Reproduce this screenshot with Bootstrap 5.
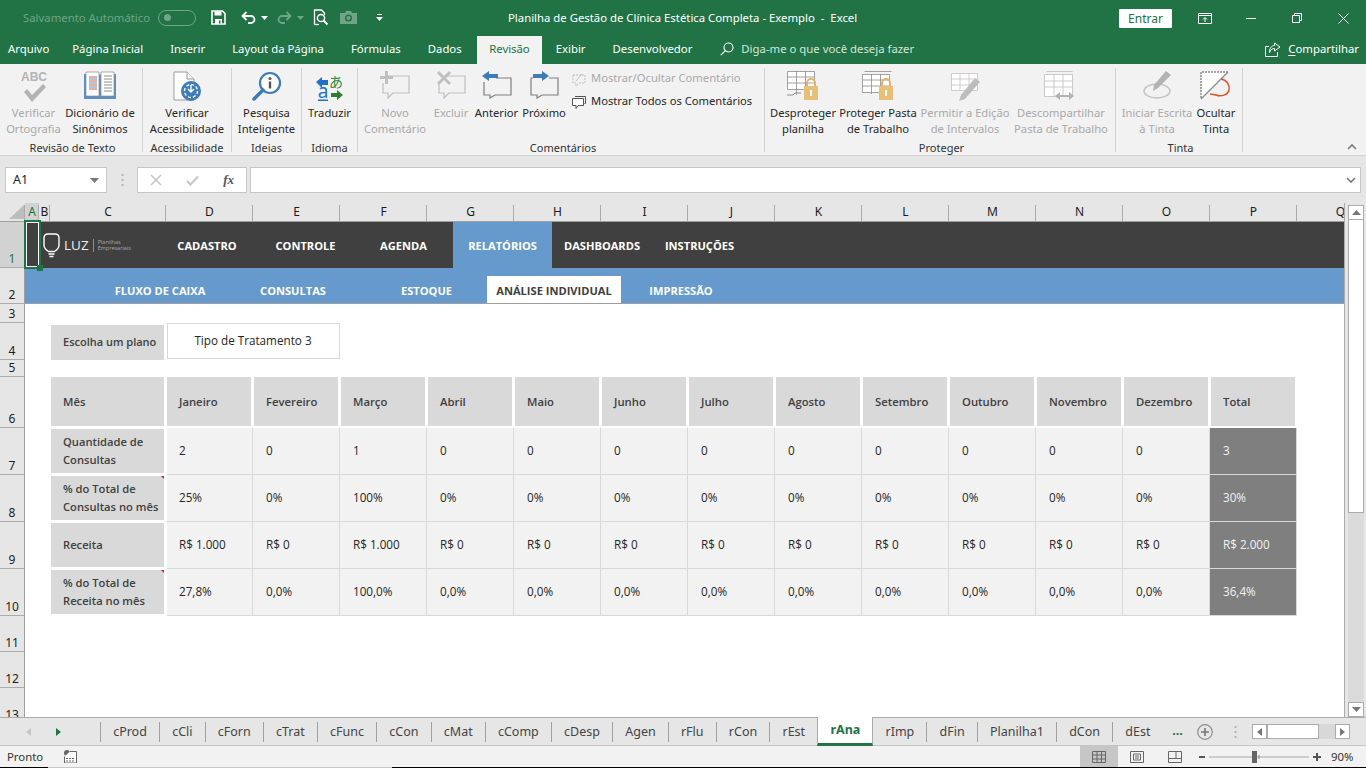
<!DOCTYPE html>
<html lang="pt-BR">
  <head>
    <meta charset="UTF-8" />
    <meta name="viewport" content="width=device-width, initial-scale=1.0" />
    <title>Planilha de Gestão de Clínica Estética Completa - Exemplo - Excel</title>
    <link href="https://cdn.jsdelivr.net/npm/bootstrap@5.3.0/dist/css/bootstrap.min.css" rel="stylesheet" />
    <style>
      html, body { height: 768px; overflow: hidden; }
      body { font-family: "Noto Sans", "Open Sans", sans-serif; font-size: 11.35px; color: #262626; background: #f2f2f2; }
      svg { display: block; flex: none; }
      .ml-5 { margin-left: 5px; } .ml-9 { margin-left: 9px; } .ml-10 { margin-left: 10px; }
      .ml-11 { margin-left: 11px; } .ml-15 { margin-left: 15px; } .ml-19 { margin-left: 19px; } .ml-21 { margin-left: 21px; }

      /* title bar */
      .xl-title { height: 36px; background: #217346; color: #fff; }
      .xl-qat { width: 508px; padding-left: 23px; }
      .xl-auto { color: #6fa487; width: 135px; }
      .xl-toggle { width: 38px; height: 16px; border: 1px solid #6fa487; border-radius: 8px; padding: 3px 5px; margin-right: 15px; }
      .xl-toggle i { display: block; width: 7px; height: 7px; border-radius: 50%; background: #6fa487; }
      .xl-caption { width: 611px; white-space: pre; }
      .xl-entrar { width: 53px; height: 19px; line-height: 19px; background: #fff; color: #217346; border-radius: 1px; text-align: center; font-size: 12px; }
      .xl-winbtn { width: 46px; margin: 0; }
      .xl-winwrap { margin-left: 10px; }

      /* ribbon tabs */
      .xl-tabs { height: 28px; background: #217346; color: #fff; }
      .xl-tab { height: 28px; line-height: 26px; padding: 0 13.5px; white-space: nowrap; }
      .xl-tab.first { padding-left: 8px; padding-right: 9.5px; }
      .xl-tab.on { background: #f2f2f2; color: #217346; padding: 0 12.5px; margin-left: 1.5px; }
      .xl-ask { color: #d5e5dc; margin-left: 14.5px; gap: 7px; padding-bottom: 2px; }
      .xl-share { margin-left: auto; padding-right: 7px; gap: 7px; padding-bottom: 2px; }
      .xl-share u { text-underline-offset: 2px; }

      /* ribbon */
      .xl-ribbon { height: 92px; background: #f2f2f2; border-bottom: 1px solid #d2d2d2; padding-top: 4px; position: relative; }
      .rb-group { height: 84px; border-right: 1px solid #d2d2d2; display: flex; flex-direction: column; flex: none; }
      .rb-items { height: 73px; display: flex; flex: none; }
      .rb-label { height: 11px; line-height: 14px; text-align: center; color: #333; font-size: 11px; }
      .rb-btn { flex: none; text-align: center; line-height: 16px; white-space: nowrap; font-size: 11.2px; color: #262626; }
      .rb-btn.off, .rb-line.off { color: #a9a9a9; }
      .rb-ico { height: 37px; padding-top: 3px; display: flex; justify-content: center; align-items: flex-start; }
      .rb-line { height: 23px; display: flex; align-items: center; gap: 5px; font-size: 11.2px; white-space: nowrap; }
      .gw-1 { width: 143px; padding-left: 3px; }
      .gw-2 { width: 89px; }
      .gw-3 { width: 70px; }
      .gw-4 { width: 56px; }
      .gw-5 { width: 407px; padding-left: 4px; }
      .gw-6 { width: 351px; padding-left: 3px; }
      .gw-7 { width: 127px; padding-left: 3px; }
      .bw-61 { width: 61px; } .bw-72 { width: 72px; } .bw-88 { width: 88px; } .bw-69 { width: 69px; }
      .bw-55 { width: 55px; } .bw-66 { width: 66px; } .bw-46 { width: 46px; } .bw-45 { width: 45px; }
      .bw-50 { width: 50px; } .bw-70 { width: 70px; } .bw-80 { width: 80px; } .bw-94 { width: 94px; }
      .bw-98 { width: 98px; } .bw-76 { width: 76px; } .bw-42 { width: 42px; }
      .rb-lines { margin-left: 3px; margin-top: -1px; }
      .rb-collapse { position: absolute; right: 9px; bottom: 5px; }

      /* formula bar */
      .xl-fbar { height: 47px; background: #e6e6e6; padding: 11px 5px 10px; }
      .fb-box { height: 26px; background: #fff; border: 1px solid #c6c6c6; }
      .fb-name { width: 102px; padding: 0 7px; font-size: 12.5px; }
      .fb-dots { width: 30px; }
      .fb-fx { width: 110px; padding: 0 12px; color: #555; font-family: "Liberation Serif", serif; font-style: italic; font-weight: 700; font-size: 13px; }
      .fb-input { flex: 1; margin-left: 3px; padding-right: 4px; }

      /* sheet */
      .xl-mid { height: 514px; background: #e6e6e6; }
      .xl-sheet {
        width: 1345px; height: 514px; overflow: hidden; background: #fff; border-right: 1px solid #ababab;
        display: grid;
        grid-template-columns: 25px 14px 11px 116px repeat(13, 87px) 87px;
        grid-template-rows: 19px 46px 36px 19px 37px 17px 51px 47px 47px 47px 47px 36px 36px 36px;
        font-family: "Open Sans", "Noto Sans", sans-serif; font-size: 11.7px; color: #262626;
      }
      .ch { background: #e6e6e6; border-bottom: 1px solid #9f9f9f; color: #1d1d1d; font-family: "Noto Sans", sans-serif; font-size: 12px; display: flex; align-items: center; justify-content: center; position: relative; }
      .ch::after { content: ""; position: absolute; right: 0; top: 2px; bottom: 0; width: 1px; background: #ababab; }
      .ch.sel { background: #d2d2d2; color: #217346; }
      .ch.q::after { display: none; }
      .rh { grid-column: 1; background: #e6e6e6; border-right: 1px solid #9f9f9f; border-bottom: 1px solid #ababab; color: #1d1d1d; font-family: "Noto Sans", sans-serif; font-size: 12px; display: flex; align-items: flex-end; justify-content: center; line-height: 17px; }
      .rh.sel { background: #d2d2d2; color: #217346; }
      .band-top { grid-column: 2 / -1; background: #404040; color: #fff; font-weight: 700; font-size: 11.1px; display: flex; position: relative; }
      .band-sub { grid-column: 2 / -1; background: #6699cc; color: #fff; font-weight: 700; font-size: 11.1px; display: flex; align-items: flex-end; padding-left: 75px; border-bottom: 1px solid #9f9f9f; }
      .nv { text-align: center; line-height: 48px; flex: none; }
      .nv.on { background: #6699cc; }
      .nw-100 { width: 100px; } .nw-97 { width: 97px; } .nw-99 { width: 99px; } .nw-95 { width: 95px; }
      .sv { text-align: center; line-height: 30px; height: 27px; flex: none; }
      .sv.on { background: #fff; color: #404040; }
      .sw-120 { width: 120px; } .sw-146 { width: 146px; } .sw-121 { width: 121px; } .sw-134 { width: 134px; }
      .lg { width: 132px; padding-left: 18px; flex: none; gap: 4px; font-weight: 400; }
      .lg-name { font-size: 13.5px; color: #eee; }
      .lg-sub { font-size: 5.5px; line-height: 6.5px; color: #a8a8a8; border-left: 1px solid #8c8c8c; padding-left: 4px; margin-left: 0; }
      .a1 { position: absolute; left: -1px; top: -2px; width: 17px; height: 49px; border: 2px solid #217346; box-shadow: inset 0 0 0 1px #fff; }
      .a1::after { content: ""; position: absolute; right: -4px; bottom: -4px; width: 6px; height: 6px; background: #217346; }
      .lbl { grid-column: 4; background: #d9d9d9; color: #404040; font-weight: 600; font-size: 11.2px; margin: 1px 2px 2px 1px; padding-left: 12px; display: flex; align-items: center; line-height: 18px; position: relative; }
      .lbl.lb-plan { margin: 2px 2px 0 1px; padding-bottom: 1px; font-size: 11px; }
      .lbl.note::after { content: ""; position: absolute; right: 0; top: 0; border-top: 3px solid #d2202a; border-left: 3px solid transparent; }
      .plan { grid-column: 5 / span 2; margin: 0 0 1px 1px; border: 1px solid #d9d9d9; display: flex; align-items: center; justify-content: center; background: #fff; padding-right: 1px; }
      .hd { background: #d9d9d9; color: #404040; font-weight: 600; font-size: 11.3px; margin: 0 2px 2px 1px; padding: 1px 0 0 12px; display: flex; align-items: center; }
      .hd.h-first { grid-column: 4; }
      .dc { background: #f2f2f2; border-right: 1px solid #d9d9d9; border-bottom: 1px solid #d9d9d9; padding-left: 13px; display: flex; align-items: center; }
      .dc.d-first { margin-left: 1px; padding-left: 12px; }
      .dc.d-total { background: #7f7f7f; color: #f2f2f2; border-right: 1px solid #d9d9d9; }

      /* vertical scroll */
      .xl-vs { width: 21px; padding: 2px 2px 0 3px; }
      .vs-btn { height: 15px; background: #fff; border: 1px solid #ababab; flex: none; }
      .vs-track { height: 482px; background: #dbdbdb; }
      .vs-thumb { height: 293px; background: #fff; border: 1px solid #ababab; border-top: 0; }

      /* sheet tabs */
      .xl-strip { height: 29px; background: #e6e6e6; border-top: 1px solid #ababab; border-bottom: 1px solid #c6c6c6; font-size: 12.5px; color: #444; }
      .st-nav { width: 100px; padding-left: 26px; gap: 25px; }
      .st-tab { height: 20px; line-height: 20px; border-left: 1px solid #a0a0a0; padding: 0 12.15px; white-space: nowrap; flex: none; }
      .st-tab.on { height: 29px; line-height: 26px; margin-top: -1px; background: #fff; color: #217346; font-weight: 700; border-left: 1px solid #ababab; border-right: 1px solid #ababab; border-bottom: 3px solid #217346; }
      .st-tab.on + .st-tab { border-left: 0; }
      .st-more { color: #217346; font-weight: 700; width: 30px; text-align: center; height: 20px; line-height: 18px; margin-right: 4px; }
      .st-hs { width: 98px; height: 15px; margin-left: 15px; display: flex; }
      .hs-btn { width: 15px; height: 15px; background: #fff; border: 1px solid #ababab; flex: none; }
      .hs-thumb { width: 52px; height: 15px; background: #fff; border: 1px solid #ababab; }
      .hs-rest { flex: 1; background: #d8d8d8; height: 15px; }

      /* status bar */
      .xl-status { height: 21px; background: #f2f2f2; padding-left: 7px; color: #333; }
      .sb-views { margin-left: auto; height: 21px; }
      .sb-view { width: 38px; height: 21px; }
      .sb-view.on { background: #c6c6c6; }
      .sb-zoom { margin-left: 5px; gap: 4px; }
      .sb-pct { width: 35px; margin-left: 10px; }
      .xl-edge { height: 2px; background: #000; }
      .xl-edge span { display: block; width: 344px; margin-left: 48px; height: 2px; background: #c8c8c8; }
    </style>
  </head>
  <body>
    <!-- title bar -->
    <div class="xl-title d-flex align-items-center">
      <div class="xl-qat d-flex align-items-center">
        <span class="xl-auto">Salvamento Automático</span>
        <div class="xl-toggle"><i></i></div>
        <svg width="15" height="15" viewBox="0 0 15 15"><path d="M1 1h10.500L14 3.500V14H1z" fill="none" stroke="#fff" stroke-width="1.600"/><path d="M3.500 1.500h7v4h-7zM4 9h7v5H4z" fill="#fff"/><path d="M8 10.500h1.500v3H8z" fill="#217346"/></svg>
        <svg width="15" height="13" viewBox="0 0 15 13" class="ml-15"><path d="M5.500 1 1.500 5l4 4M2 5h8a3.500 3.500 0 0 1 0 7H7" fill="none" stroke="#fff" stroke-width="1.800"/></svg>
        <svg width="7" height="4" viewBox="0 0 7 4" class="ml-5"><path d="M0 0h7L3.500 4z" fill="#fff"/></svg>
        <svg width="15" height="13" viewBox="0 0 15 13" class="ml-9"><path d="M9.500 1l4 4-4 4M13 5H5a3.500 3.500 0 0 0 0 7h3" fill="none" stroke="#6fa487" stroke-width="1.800"/></svg>
        <svg width="7" height="4" viewBox="0 0 7 4" class="ml-5"><path d="M0 0h7L3.500 4z" fill="#6fa487"/></svg>
        <svg width="16" height="17" viewBox="0 0 16 17" class="ml-9"><path d="M1.500 15.500V1h7l3 3v2" fill="none" stroke="#fff" stroke-width="1.300"/><path d="M1.500 15.500H6" fill="none" stroke="#fff" stroke-width="1.300"/><circle cx="8" cy="9" r="3.600" fill="none" stroke="#fff" stroke-width="1.500"/><path d="m10.500 11.500 4 4" stroke="#fff" stroke-width="2"/></svg>
        <svg width="17" height="13" viewBox="0 0 17 13" class="ml-11"><path d="M0 2h5l1-2h5l1 2h5v11H0z" fill="#6fa487"/><circle cx="8.500" cy="7" r="3.500" fill="#217346"/><circle cx="8.500" cy="7" r="2" fill="#6fa487"/></svg>
        <svg width="7" height="7" viewBox="0 0 7 7" class="ml-19"><path d="M1 0h5v1H1zM0 3h7L3.500 7z" fill="#fff"/></svg>
      </div>
      <div class="xl-caption">Planilha de Gestão de Clínica Estética Completa - Exemplo  -  Excel</div>
      <div class="xl-entrar">Entrar</div>
      <div class="xl-winwrap d-flex align-items-center">
        <div class="xl-winbtn d-flex justify-content-center"><svg width="14" height="11" viewBox="0 0 14 11"><path d="M.5.500h13v10H.5zM.5 2.500h13" fill="none" stroke="#fff"/><path d="M7 9V4.500M5 6.500l2-2 2 2" fill="none" stroke="#fff"/></svg></div>
        <div class="xl-winbtn d-flex justify-content-center"><svg width="10" height="1" viewBox="0 0 10 1"><path d="M0 .5h10" stroke="#fff"/></svg></div>
        <div class="xl-winbtn d-flex justify-content-center"><svg width="10" height="10" viewBox="0 0 10 10"><path d="M.5 2.500h7v7h-7zM2.500 2.500v-2h7v7h-2" fill="none" stroke="#fff"/></svg></div>
        <div class="xl-winbtn d-flex justify-content-center"><svg width="11" height="11" viewBox="0 0 11 11"><path d="m.5.500 10 10M10.500.500l-10 10" stroke="#fff"/></svg></div>
      </div>
    </div>

    <!-- ribbon tabs -->
    <div class="xl-tabs d-flex">
      <div class="xl-tab first">Arquivo</div>
      <div class="xl-tab">Página Inicial</div>
      <div class="xl-tab">Inserir</div>
      <div class="xl-tab">Layout da Página</div>
      <div class="xl-tab">Fórmulas</div>
      <div class="xl-tab">Dados</div>
      <div class="xl-tab on">Revisão</div>
      <div class="xl-tab">Exibir</div>
      <div class="xl-tab">Desenvolvedor</div>
      <div class="xl-ask d-flex align-items-center">
        <svg width="14" height="14" viewBox="0 0 14 14"><circle cx="8.500" cy="5.500" r="4.500" fill="none" stroke="#fff" stroke-width="1.100"/><path d="m5.300 8.700-4.500 4.500" stroke="#fff" stroke-width="1.200"/></svg>
        <span>Diga-me o que você deseja fazer</span>
      </div>
      <div class="xl-share d-flex align-items-center">
        <svg width="16" height="15" viewBox="0 0 16 15"><path d="M4 4.500H.5v10h12V10" fill="none" stroke="#fff"/><path d="M9.500 1 15 5l-5.500 4V6.500C7 6.500 5.500 8 4.500 10.500 4.500 6.500 6.500 3.500 9.500 3.500z" fill="none" stroke="#fff"/></svg>
        <span><u>C</u>ompartilhar</span>
      </div>
    </div>

    <!-- ribbon -->
    <div class="xl-ribbon d-flex">
      <div class="rb-group gw-1">
        <div class="rb-items">
          <div class="rb-btn off bw-61">
            <div class="rb-ico"><svg width="30" height="34" viewBox="0 0 30 34"><text x="15" y="10" text-anchor="middle" font-family="Liberation Sans, sans-serif" font-size="12" font-weight="700" fill="#b3b3b3">ABC</text><path d="m5 21 3-3 5 6 11-11 3 3-14 15z" fill="#b3b3b3"/></svg></div>
            Verificar<br />Ortografia
          </div>
          <div class="rb-btn bw-72">
            <div class="rb-ico"><svg width="32" height="28" viewBox="0 0 32 28"><path d="M0 3h15l1 1 1-1h15v25H0z" fill="#5b8fc6"/><path d="M2 1h13v24H2zM17 1h13v24H17z" fill="#fff" stroke="#8c8c8c" stroke-width=".7"/><path d="M5 6h8M5 10h8M5 14h8M5 18h8" stroke="#d0603a"/><path d="M5 8h8M5 12h8M5 16h8" stroke="#5b8fc6"/><path d="M20 5h8M20 8h8M20 11h8M20 14h8M20 17h8M20 20h8" stroke="#8c8c8c"/></svg></div>
            Dicionário de<br />Sinônimos
          </div>
        </div>
        <div class="rb-label">Revisão de Texto</div>
      </div>
      <div class="rb-group gw-2">
        <div class="rb-items">
          <div class="rb-btn bw-88">
            <div class="rb-ico"><svg width="29" height="31" viewBox="0 0 29 31"><path d="M1 1h13l7 7v21H1z" fill="#fff" stroke="#9b9b9b"/><path d="M14 1v7h7" fill="#f2f2f2" stroke="#9b9b9b"/><circle cx="18" cy="20" r="10" fill="#3e7cb8"/><circle cx="18" cy="20" r="6.500" fill="none" stroke="#fff" stroke-width="1.400" stroke-dasharray="3 2"/><path d="M18 14v7M15 18l3 3 3-3" fill="none" stroke="#fff" stroke-width="1.400"/></svg></div>
            Verificar<br />Acessibilidade
          </div>
        </div>
        <div class="rb-label">Acessibilidade</div>
      </div>
      <div class="rb-group gw-3">
        <div class="rb-items">
          <div class="rb-btn bw-69">
            <div class="rb-ico"><svg width="30" height="31" viewBox="0 0 30 31"><circle cx="18" cy="12" r="10" fill="#fff" stroke="#3e7cb8" stroke-width="2.200"/><path d="m11 19-9 9" stroke="#3e7cb8" stroke-width="3.500" stroke-linecap="round"/><circle cx="18" cy="7.500" r="1.500" fill="#555"/><path d="M16.800 10.500h2.400v7h-2.400z" fill="#555"/></svg></div>
            Pesquisa<br />Inteligente
          </div>
        </div>
        <div class="rb-label">Ideias</div>
      </div>
      <div class="rb-group gw-4">
        <div class="rb-items">
          <div class="rb-btn bw-55">
            <div class="rb-ico"><svg width="28" height="37" viewBox="0 0 28 37"><path d="M0 11 6 6v3h6v5H6v3z" fill="#1e73c8"/><text x="20" y="16" text-anchor="middle" font-family="Noto Sans CJK JP, sans-serif" font-size="14" fill="#2e8b3a">あ</text><text x="7" y="27" text-anchor="middle" font-family="Noto Sans, sans-serif" font-size="19" fill="#1e73c8">a</text><path d="M2 28.500h10v1.500H2z" fill="#1e73c8"/><path d="M27 24l-6 5v-3h-6v-4h6v-3z" fill="#2e7d32"/></svg></div>
            Traduzir
          </div>
        </div>
        <div class="rb-label">Idioma</div>
      </div>
      <div class="rb-group gw-5">
        <div class="rb-items">
          <div class="rb-btn off bw-66">
            <div class="rb-ico"><svg width="30" height="28" viewBox="0 0 30 28"><path d="M7 5h22v17H13l-5 5v-5H3V12" fill="none" stroke="#bfbfbf" stroke-width="1.200"/><path d="M5 0h3v5h5v3H8v5H5V8H0V5h5z" fill="#bfbfbf"/></svg></div>
            Novo<br />Comentário
          </div>
          <div class="rb-btn off bw-46">
            <div class="rb-ico"><svg width="30" height="28" viewBox="0 0 30 28"><path d="M10 5h19v17H13l-5 5v-5H3V13" fill="none" stroke="#bfbfbf" stroke-width="1.200"/><path d="m1 2 2-2 5 5 5-5 2 2-5 5 5 5-2 2-5-5-5 5-2-2 5-5z" fill="#bfbfbf"/></svg></div>
            Excluir
          </div>
          <div class="rb-btn bw-45">
            <div class="rb-ico"><svg width="30" height="28" viewBox="0 0 30 28"><path d="M14 7h15v17H13l-5 3v-3H2V11" fill="none" stroke="#7f7f7f" stroke-width="1.200"/><path d="M0 5 7 0v3h9v4H7v3z" fill="#3e7cb8"/></svg></div>
            Anterior
          </div>
          <div class="rb-btn bw-50">
            <div class="rb-ico"><svg width="30" height="28" viewBox="0 0 30 28"><path d="M20 7h9v17H13l-5 3v-3H2V7h2" fill="none" stroke="#7f7f7f" stroke-width="1.200"/><path d="M20 5l-7-5v3H4v4h9v3z" fill="#3e7cb8"/></svg></div>
            Próximo
          </div>
          <div class="rb-lines">
            <div class="rb-line off"><svg width="14" height="14" viewBox="0 0 14 14"><path d="M1 3h12v8H7l-3 3v-3H1z" fill="none" stroke="#bfbfbf" stroke-dasharray="2 1"/><path d="m4 9 6-7" stroke="#bfbfbf"/></svg>Mostrar/Ocultar Comentário</div>
            <div class="rb-line"><svg width="14" height="14" viewBox="0 0 14 14"><path d="M3 1.500h10.500v7h-1" fill="none" stroke="#555"/><path d="M.5 3.500h11v7H6l-2 3v-3H.5z" fill="#fff" stroke="#555"/></svg>Mostrar Todos os Comentários</div>
          </div>
        </div>
        <div class="rb-label">Comentários</div>
      </div>
      <div class="rb-group gw-6">
        <div class="rb-items">
          <div class="rb-btn bw-70">
            <div class="rb-ico"><svg width="32" height="30" viewBox="0 0 32 30"><path d="M.5.500h27v18h-27zM.5 6h27M.5 12h27M9.500 0v24M18.500 0v18" fill="#fff" stroke="#8c8c8c" stroke-width=".8"/><path d="M0 24h6l2-2h6" fill="none" stroke="#8c8c8c"/><path d="M20 15v-3a4 4 0 0 1 8 0v3" fill="none" stroke="#e3b465" stroke-width="2"/><path d="M17 15h14v14H17z" fill="#e8bf79"/><path d="M23 19h2v6h-2z" fill="#fff"/></svg></div>
            Desproteger<br />planilha
          </div>
          <div class="rb-btn bw-80">
            <div class="rb-ico"><svg width="32" height="30" viewBox="0 0 32 30"><path d="M2.500.500h27M.5 3.500h27v18H.5zM.5 9h27M.5 15h27M9.500 3v20M18.500 3v18" fill="#fff" stroke="#8c8c8c" stroke-width=".8"/><path d="M20 15v-3a4 4 0 0 1 8 0v3" fill="none" stroke="#e3b465" stroke-width="2"/><path d="M17 15h14v14H17z" fill="#e8bf79"/><path d="M23 19h2v6h-2z" fill="#fff"/></svg></div>
            Proteger Pasta<br />de Trabalho
          </div>
          <div class="rb-btn off bw-94">
            <div class="rb-ico"><svg width="32" height="30" viewBox="0 0 32 30"><path d="M2.500 2.500h26v17h-26zM2.500 8h26M2.500 14h26M11 2v18M20 2v18" fill="#fff" stroke="#cdc5cd" stroke-width=".9"/><path d="m26 7 5 4-15 17-6 2 2-6z" fill="#bdbdbd"/></svg></div>
            Permitir a Edição<br />de Intervalos
          </div>
          <div class="rb-btn off bw-98">
            <div class="rb-ico"><svg width="34" height="32" viewBox="0 0 34 32"><path d="M2.500.500h26M.5 3.500h28v22H.5zM.5 10h28M.5 16h28M10 3v23M19 3v23" fill="#fff" stroke="#c4c4c4" stroke-width=".9"/><path d="M11 25l5-4v3h9v-3l5 4-5 4v-3h-9v3z" fill="#b3b3b3"/></svg></div>
            Descompartilhar<br />Pasta de Trabalho
          </div>
        </div>
        <div class="rb-label">Proteger</div>
      </div>
      <div class="rb-group gw-7">
        <div class="rb-items">
          <div class="rb-btn off bw-76">
            <div class="rb-ico"><svg width="30" height="30" viewBox="0 0 30 30"><ellipse cx="15" cy="20" rx="13" ry="7" fill="none" stroke="#c4c4c4" stroke-width="1.500"/><path d="m24 0 5 4-13 13-5 3 1-6z" fill="#b3b3b3"/></svg></div>
            Iniciar Escrita<br />à Tinta
          </div>
          <div class="rb-btn bw-42">
            <div class="rb-ico"><svg width="32" height="30" viewBox="0 0 32 30"><path d="M1 1h27L1 28z" fill="#fff"/><path d="M28 1H1v27" fill="none" stroke="#555" stroke-dasharray="2 1"/><path d="M28 1 1 28" stroke="#8c8c8c" stroke-width="1.200"/><path d="M21 8c6 1 9 6 8 11-1 5-8 7-13 5l-6-1" fill="none" stroke="#d9532c" stroke-width="1.500"/></svg></div>
            Ocultar<br />Tinta
          </div>
        </div>
        <div class="rb-label">Tinta</div>
      </div>
      <svg class="rb-collapse" width="10" height="6" viewBox="0 0 10 6"><path d="m1 5 4-4 4 4" fill="none" stroke="#777" stroke-width="1.600"/></svg>
    </div>

    <!-- formula bar -->
    <div class="xl-fbar d-flex">
      <div class="fb-box fb-name d-flex align-items-center justify-content-between">
        <span>A1</span>
        <svg width="9" height="5" viewBox="0 0 9 5"><path d="M0 0h9L4.500 5z" fill="#777"/></svg>
      </div>
      <div class="fb-dots d-flex align-items-center justify-content-center">
        <svg width="3" height="12" viewBox="0 0 3 12"><path d="M.5 0h2v2h-2zM.5 5h2v2h-2zM.5 10h2v2h-2z" fill="#b5b5b5"/></svg>
      </div>
      <div class="fb-box fb-fx d-flex align-items-center justify-content-between">
        <svg width="12" height="12" viewBox="0 0 12 12"><path d="m1 1 10 10M11 1 1 11" stroke="#c6c6c6" stroke-width="1.500"/></svg>
        <svg width="13" height="11" viewBox="0 0 13 11"><path d="m1 6 3.500 3.500L12 1.500" fill="none" stroke="#c6c6c6" stroke-width="2"/></svg>
        <span>fx</span>
      </div>
      <div class="fb-box fb-input d-flex align-items-center justify-content-end">
        <svg width="10" height="6" viewBox="0 0 10 6"><path d="m1 1 4 4 4-4" fill="none" stroke="#777" stroke-width="1.600"/></svg>
      </div>
    </div>

    <!-- sheet -->
    <div class="xl-mid d-flex">
      <div class="xl-sheet">
        <div class="ch"><svg width="18" height="14" viewBox="0 0 18 14" class="ms-1"><path d="M18 0v14H3z" fill="#bdbdbd"/></svg></div>
        <div class="ch sel">A</div><div class="ch">B</div><div class="ch">C</div>
        <div class="ch">D</div><div class="ch">E</div><div class="ch">F</div><div class="ch">G</div><div class="ch">H</div><div class="ch">I</div><div class="ch">J</div><div class="ch">K</div><div class="ch">L</div><div class="ch">M</div><div class="ch">N</div><div class="ch">O</div><div class="ch">P</div><div class="ch q">Q</div>

        <div class="rh sel">1</div>
        <div class="band-top">
          <div class="a1"></div>
          <div class="lg d-flex align-items-center">
            <svg width="17" height="25" viewBox="0 0 17 25"><path d="M5 1h7c2.500 0 4 1.500 4 4v7c0 3-2 5-4.500 6.500h-6C3 17 1 15 1 12V5c0-2.500 1.500-4 4-4z" fill="none" stroke="#fff" stroke-width="1.400"/><path d="M5.500 21h6M6.500 23.500h4" stroke="#fff" stroke-width="1.400"/></svg>
            <span class="lg-name">LUZ</span>
            <span class="lg-sub">Planilhas<br />Empresariais</span>
          </div>
          <div class="nv nw-100">CADASTRO</div>
          <div class="nv nw-97">CONTROLE</div>
          <div class="nv nw-99">AGENDA</div>
          <div class="nv nw-99 on">RELATÓRIOS</div>
          <div class="nv nw-100">DASHBOARDS</div>
          <div class="nv nw-95">INSTRUÇÕES</div>
        </div>

        <div class="rh">2</div>
        <div class="band-sub">
          <div class="sv sw-120">FLUXO DE CAIXA</div>
          <div class="sv sw-146">CONSULTAS</div>
          <div class="sv sw-121">ESTOQUE</div>
          <div class="sv sw-134 on">ANÁLISE INDIVIDUAL</div>
          <div class="sv sw-120">IMPRESSÃO</div>
        </div>

        <div class="rh">3</div>

        <div class="rh">4</div>
        <div class="lbl lb-plan">Escolha um plano</div>
        <div class="plan">Tipo de Tratamento 3</div>

        <div class="rh">5</div>

        <div class="rh">6</div>
        <div class="hd h-first">Mês</div>
        <div class="hd">Janeiro</div><div class="hd">Fevereiro</div><div class="hd">Março</div><div class="hd">Abril</div><div class="hd">Maio</div><div class="hd">Junho</div><div class="hd">Julho</div><div class="hd">Agosto</div><div class="hd">Setembro</div><div class="hd">Outubro</div><div class="hd">Novembro</div><div class="hd">Dezembro</div><div class="hd">Total</div>

        <div class="rh">7</div>
        <div class="lbl">Quantidade de<br />Consultas</div>
        <div class="dc d-first">2</div><div class="dc">0</div><div class="dc">1</div><div class="dc">0</div><div class="dc">0</div><div class="dc">0</div><div class="dc">0</div><div class="dc">0</div><div class="dc">0</div><div class="dc">0</div><div class="dc">0</div><div class="dc">0</div><div class="dc d-total">3</div>

        <div class="rh">8</div>
        <div class="lbl note">% do Total de<br />Consultas no mês</div>
        <div class="dc d-first">25%</div><div class="dc">0%</div><div class="dc">100%</div><div class="dc">0%</div><div class="dc">0%</div><div class="dc">0%</div><div class="dc">0%</div><div class="dc">0%</div><div class="dc">0%</div><div class="dc">0%</div><div class="dc">0%</div><div class="dc">0%</div><div class="dc d-total">30%</div>

        <div class="rh">9</div>
        <div class="lbl">Receita</div>
        <div class="dc d-first">R$ 1.000</div><div class="dc">R$ 0</div><div class="dc">R$ 1.000</div><div class="dc">R$ 0</div><div class="dc">R$ 0</div><div class="dc">R$ 0</div><div class="dc">R$ 0</div><div class="dc">R$ 0</div><div class="dc">R$ 0</div><div class="dc">R$ 0</div><div class="dc">R$ 0</div><div class="dc">R$ 0</div><div class="dc d-total">R$ 2.000</div>

        <div class="rh">10</div>
        <div class="lbl note">% do Total de<br />Receita no mês</div>
        <div class="dc d-first">27,8%</div><div class="dc">0,0%</div><div class="dc">100,0%</div><div class="dc">0,0%</div><div class="dc">0,0%</div><div class="dc">0,0%</div><div class="dc">0,0%</div><div class="dc">0,0%</div><div class="dc">0,0%</div><div class="dc">0,0%</div><div class="dc">0,0%</div><div class="dc">0,0%</div><div class="dc d-total">36,4%</div>

        <div class="rh">11</div>
        <div class="rh">12</div>
        <div class="rh">13</div>
      </div>
      <div class="xl-vs d-flex flex-column">
        <div class="vs-btn d-flex align-items-center justify-content-center"><svg width="9" height="5" viewBox="0 0 9 5"><path d="M0 5h9L4.500 0z" fill="#777"/></svg></div>
        <div class="vs-track"><div class="vs-thumb"></div></div>
        <div class="vs-btn d-flex align-items-center justify-content-center"><svg width="9" height="5" viewBox="0 0 9 5"><path d="M0 0h9L4.500 5z" fill="#777"/></svg></div>
      </div>
    </div>

    <!-- sheet tabs -->
    <div class="xl-strip d-flex align-items-center">
      <div class="st-nav d-flex align-items-center">
        <svg width="5" height="8" viewBox="0 0 5 8"><path d="M5 0v8L0 4z" fill="#c6c6c6"/></svg>
        <svg width="5" height="8" viewBox="0 0 5 8"><path d="M0 0v8l5-4z" fill="#217346"/></svg>
      </div>
      <div class="st-tab">cProd</div><div class="st-tab">cCli</div><div class="st-tab">cForn</div><div class="st-tab">cTrat</div><div class="st-tab">cFunc</div><div class="st-tab">cCon</div><div class="st-tab">cMat</div><div class="st-tab">cComp</div><div class="st-tab">cDesp</div><div class="st-tab">Agen</div><div class="st-tab">rFlu</div><div class="st-tab">rCon</div><div class="st-tab">rEst</div>
      <div class="st-tab on">rAna</div>
      <div class="st-tab">rImp</div><div class="st-tab">dFin</div><div class="st-tab">Planilha1</div><div class="st-tab">dCon</div><div class="st-tab">dEst</div>
      <div class="st-more">...</div>
      <svg width="16" height="16" viewBox="0 0 16 16"><circle cx="8" cy="8" r="7.300" fill="none" stroke="#8c8c8c" stroke-width="1.200"/><path d="M8 4v8M4 8h8" stroke="#777" stroke-width="1.600"/></svg>
      <svg width="3" height="12" viewBox="0 0 3 12" class="ml-21"><path d="M.5 0h2v2h-2zM.5 5h2v2h-2zM.5 10h2v2h-2z" fill="#b5b5b5"/></svg>
      <div class="st-hs">
        <div class="hs-btn d-flex align-items-center justify-content-center"><svg width="5" height="8" viewBox="0 0 5 8"><path d="M5 0v8L0 4z" fill="#777"/></svg></div>
        <div class="hs-thumb"></div>
        <div class="hs-rest"></div>
        <div class="hs-btn d-flex align-items-center justify-content-center"><svg width="5" height="8" viewBox="0 0 5 8"><path d="M0 0v8l5-4z" fill="#777"/></svg></div>
      </div>
    </div>

    <!-- status bar -->
    <div class="xl-status d-flex align-items-center">
      <span>Pronto</span>
      <svg width="13" height="13" viewBox="0 0 13 13" class="ml-21"><circle cx="3" cy="3" r="3" fill="#666"/><path d="M6 1.500h6.500V13H.5V6.500" fill="#fff" stroke="#666"/><path d="M2 8.500h9M2 11h9" stroke="#666" stroke-dasharray="2 1"/></svg>
      <div class="sb-views d-flex align-items-center">
        <div class="sb-view on d-flex align-items-center justify-content-center"><svg width="14" height="12" viewBox="0 0 14 12"><path d="M.5.500h13v11H.5zM.5 4h13M.5 8h13M5 0v12M9.500 0v12" fill="none" stroke="#666"/></svg></div>
        <div class="sb-view d-flex align-items-center justify-content-center"><svg width="14" height="12" viewBox="0 0 14 12"><path d="M.5.500h13v11H.5z" fill="none" stroke="#666"/><path d="M3.500 3h7v6h-7zM5 5h4M5 7h4" fill="none" stroke="#666"/></svg></div>
        <div class="sb-view d-flex align-items-center justify-content-center"><svg width="14" height="12" viewBox="0 0 14 12"><path d="M.5.500h13v11H.5zM.5 7.500h13M8 0v7.500" fill="none" stroke="#666"/></svg></div>
      </div>
      <div class="sb-zoom d-flex align-items-center">
        <svg width="6" height="2" viewBox="0 0 6 2"><path d="M0 0h6v2H0z" fill="#555"/></svg>
        <svg width="100" height="14" viewBox="0 0 100 14"><path d="M0 7h100" stroke="#a9a9a9"/><path d="M50 5v4" stroke="#888"/><path d="M43 1h5v12h-5z" fill="#666"/></svg>
        <svg width="8" height="8" viewBox="0 0 8 8"><path d="M3 0h2v3h3v2H5v3H3V5H0V3h3z" fill="#555"/></svg>
      </div>
      <span class="sb-pct">90%</span>
    </div>
    <div class="xl-edge"><span></span></div>

    <script src="https://cdn.jsdelivr.net/npm/bootstrap@5.3.0/dist/js/bootstrap.bundle.min.js"></script>
  </body>
</html>
